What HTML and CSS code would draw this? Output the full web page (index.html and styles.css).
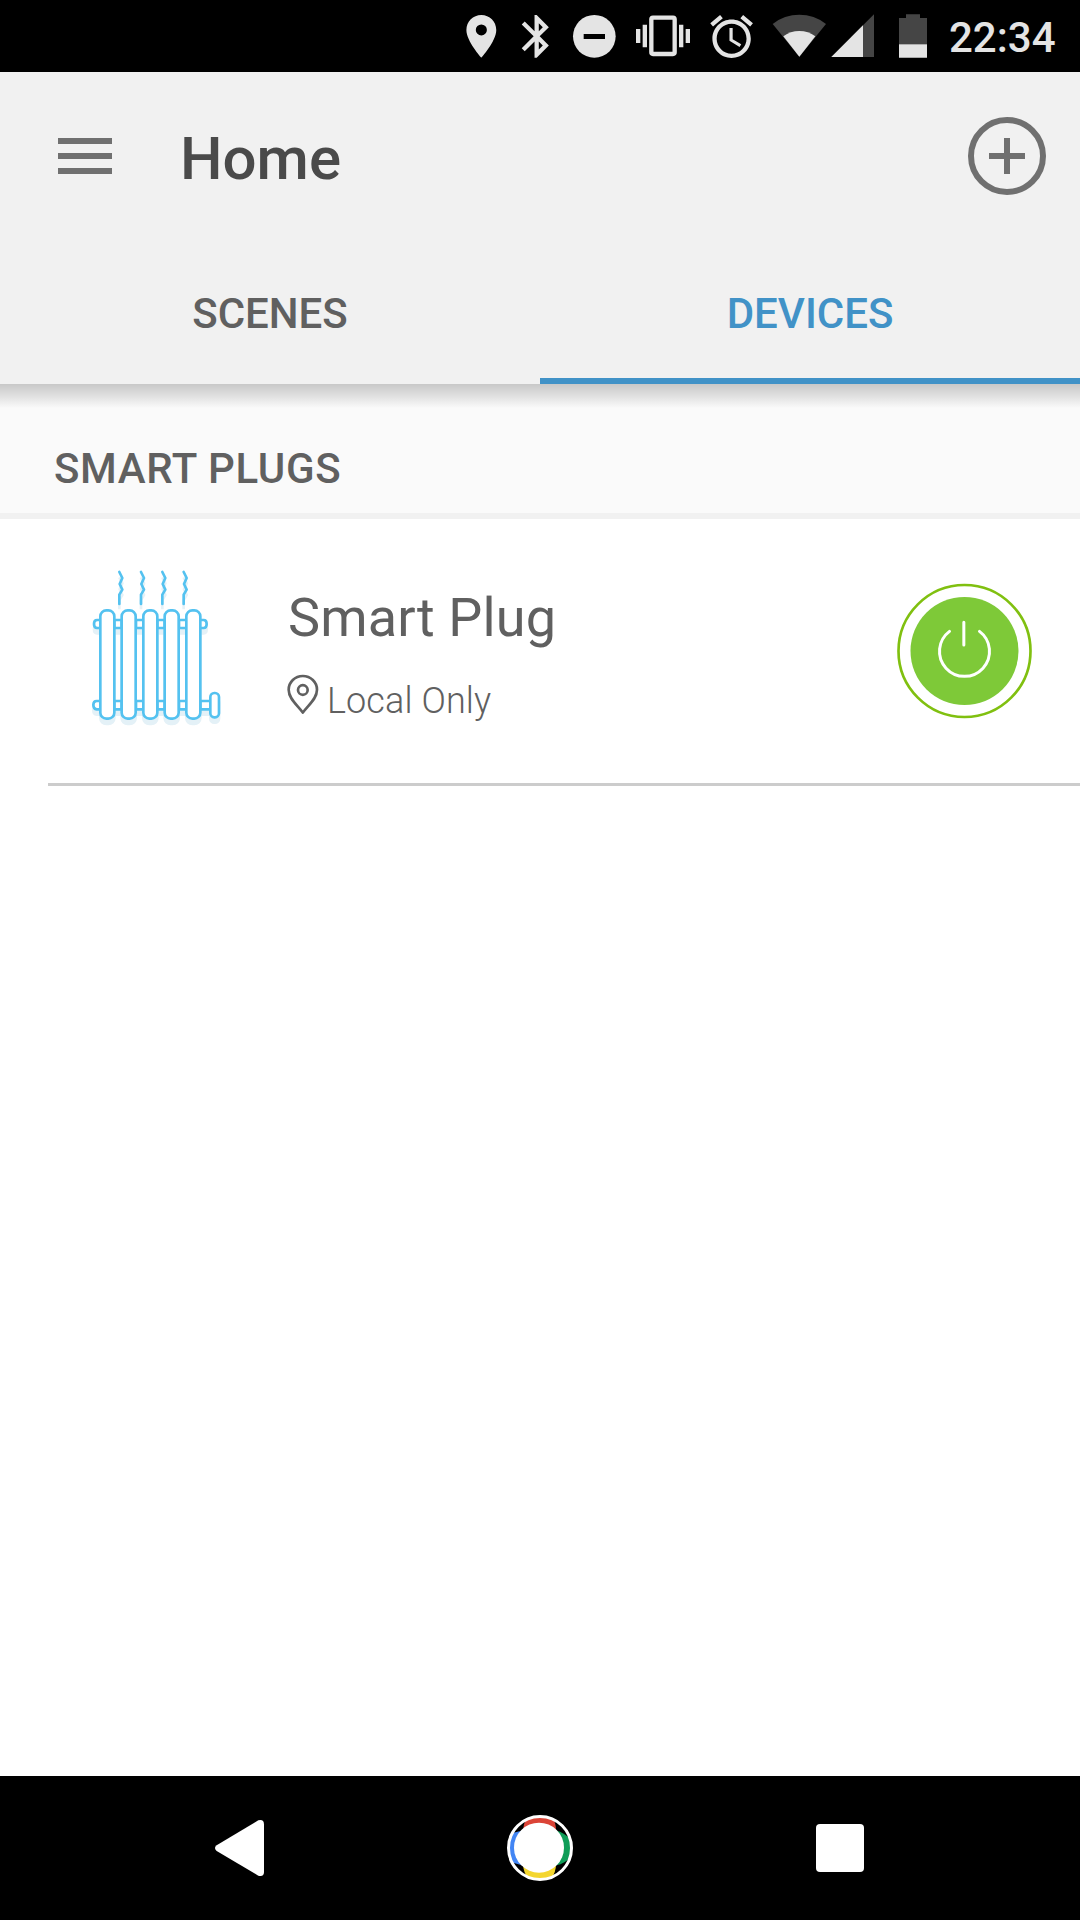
FILE: index.html
```html
<!DOCTYPE html>
<html lang="en">
<head>
<meta charset="utf-8">
<title>Home</title>
<link rel="stylesheet" href="styles.css">
</head>
<body>
<div class="status-bar">
  <svg width="60" height="72" viewBox="0 0 180 216"><path transform="translate(17.2 32.2) scale(6.4)" fill-rule="evenodd" d="M12 2C8.13 2 5 5.13 5 9c0 5.25 7 13 7 13s7-7.75 7-13c0-3.87-3.13-7-7-7zm0 9.6a2.6 2.6 0 1 1 0-5.2 2.6 2.6 0 0 1 0 5.2z"/></svg>
  <svg width="50" height="72" viewBox="180 0 150 216"><path transform="translate(183.2 32.2) scale(6.4)" d="M17.71 7.71L12 2h-1v7.59L6.41 5 5 6.41 10.59 12 5 17.59 6.41 19 11 14.41V22h1l5.71-5.71-4.3-4.29 4.3-4.29zM13 5.83l1.88 1.88L13 9.59V5.83zm1.88 10.46L13 18.17v-3.76l1.88 1.88z"/></svg>
  <svg width="70" height="72" viewBox="330 0 210 216"><circle cx="433" cy="109" r="64"/><path fill="#000" d="M401 102h64v15h-64z"/></svg>
  <svg width="70" height="72" viewBox="540 0 210 216"><rect x="604" y="53" width="70" height="109" rx="5" fill="none" stroke="#e4e4e4" stroke-width="13"/><path d="M558 87h13v42h-13zM578 74h13v68h-13zM687 74h13v68h-13zM707 87h13v42h-13z"/></svg>
  <svg width="60" height="72" viewBox="750 0 180 216"><path transform="translate(768 33) scale(6.4)" d="M22 5.72l-4.6-3.86-1.29 1.53 4.6 3.86L22 5.72zM7.88 3.39L6.6 1.86 2 5.71l1.29 1.53 4.59-3.85zM12.5 8H11v6l4.75 2.85.75-1.23-4-2.37V8zM12 4c-4.97 0-9 4.03-9 9s4.02 9 9 9c4.97 0 9-4.03 9-9s-4.03-9-9-9zm0 16c-3.87 0-7-3.13-7-7s3.13-7 7-7 7 3.13 7 7-3.13 7-7 7z"/></svg>
  <svg width="69" height="72" viewBox="0 0 207 216"><path class="dim" d="M118 170L38 72A129 129 0 0 1 198 72Z"/><path d="M118 170L70 109A79 79 0 0 1 166 109Z"/></svg>
  <svg width="53" height="72" viewBox="207 0 159 216"><path class="dim" d="M342 43V171H214Z"/><path d="M309 76V171H214Z"/></svg>
  <svg width="60" height="72" viewBox="366 0 180 216"><path class="dim" d="M438 43h42v11h21v119h-84V54h21z"/><path d="M417 133h84v40h-84z"/></svg>
  <span class="clock">22:34</span>
</div>

<header class="app-header">
  <div class="toolbar">
    <svg class="menu-icon" width="54" height="36" viewBox="0 0 54 36"><path d="M0 0h54v6H0zM0 15h54v6H0zM0 30h54v6H0z"/></svg>
    <h1 class="title">Home</h1>
    <svg class="add-icon" width="80" height="80" viewBox="0 0 80 80"><circle cx="40" cy="40" r="36"/><path d="M22 40h36M40 22v36"/></svg>
  </div>
  <nav class="tabs">
    <a class="tab">SCENES</a>
    <a class="tab active">DEVICES</a>
  </nav>
</header>

<main class="content">
  <h2 class="section-title">SMART PLUGS</h2>
  <section class="device">
    <svg class="radiator" width="160" height="170" viewBox="0 0 480 510">
      <defs>
        <g id="radiator-shape">
          <path fill="none" d="M118 36l9 18-8 18 8 17-9 15v28M183 36l9 18-8 18 8 17-9 15v28M247 36l9 18-8 18 8 17-9 15v28M311 36l9 18-8 18 8 17-9 15v28"/>
          <path d="M61 180H51q-9 0-9 12t9 12H61M361 180h10q9 0 9 12t-9 12H361"/>
          <path d="M103 180h22v24h-22zM168 180h22v24h-22zM232 180h22v24h-22zM297 180h22v24h-22z"/>
          <path d="M61 423H50q-10 0-10 12t10 13H61M103 423h22v25h-22zM168 423h22v25h-22zM232 423h22v25h-22zM297 423h22v25h-22zM361 423h30v25h-30z"/>
          <rect x="61" y="151" width="42" height="325" rx="18"/><rect x="125" y="151" width="42" height="325" rx="18"/><rect x="190" y="151" width="42" height="325" rx="18"/><rect x="254" y="151" width="42" height="325" rx="18"/><rect x="319" y="151" width="42" height="325" rx="18"/>
          <rect x="391" y="399" width="26" height="73" rx="12"/>
        </g>
      </defs>
      <use href="#radiator-shape" class="radiator-shade" y="16"/>
      <use href="#radiator-shape" class="radiator-line"/>
    </svg>
    <div class="device-text">
      <div class="device-name">Smart Plug</div>
      <div class="device-status">
        <svg width="40" height="44" viewBox="42 306 120 132"><path d="M98.500 428C86 408 56 388 56 359a42.500 41 0 0 1 85 0C141 388 111 408 98.500 428Z"/><circle cx="98.500" cy="360" r="14.500"/></svg>
        <span>Local Only</span>
      </div>
    </div>
    <svg class="power" width="200" height="160" viewBox="0 0 600 480"><circle cx="253.500" cy="243" r="198" fill="#fff" stroke="#80c010" stroke-width="8"/><circle cx="253.500" cy="243" r="162" fill="#7ec938"/><path d="M208.500 184A75 75 0 1 0 298.500 184M251.500 157V225" fill="none" stroke="#fff" stroke-width="9" stroke-linecap="round"/></svg>
  </section>
</main>

<footer class="nav-bar">
  <div class="nav-item"><svg width="60" height="60" viewBox="90 144 180 180"><path fill="#fff" d="M110 226L235 151Q252 147 252 163V307Q252 321 235 317L110 243Q100 234 110 226Z"/></svg></div>
  <div class="nav-item"><svg width="72" height="72" viewBox="972 126 216 216">
    <clipPath id="home-disc"><circle cx="1079.500" cy="234" r="96"/></clipPath>
    <g clip-path="url(#home-disc)"><path fill="#db4437" d="M1029 180Q1030 163 1040 144H1118Q1128 160 1128 180Z"/><path fill="#4285f4" d="M1027 286Q1008 283 980 270V200Q1000 185 1027 182Z"/><path fill="#0f9d58" d="M1130 182Q1150 186 1180 214V254Q1155 282 1130 286Z"/><path fill="#f4d62f" d="M1029 284Q1030 305 1046 330H1112Q1128 306 1128 284Z"/></g>
    <circle cx="1080" cy="234" r="94.500" fill="none" stroke="#fff" stroke-width="9"/><circle cx="1077" cy="233" r="75" fill="#fff"/></svg></div>
  <div class="nav-item"><div class="recents"></div></div>
</footer>
</body>
</html>
```
FILE: styles.css
```css
* { box-sizing: border-box; }
body {
  margin: 0;
  width: 1080px;
  height: 1920px;
  display: flex;
  flex-direction: column;
  overflow: hidden;
  background: #fff;
  color: #606060;
  font-family: Roboto, sans-serif;
}
svg { display: block; flex: none; }
h1, h2 { margin: 0; font-weight: 500; }

.status-bar {
  height: 72px;
  padding-left: 450px;
  display: flex;
  background: #000;
  fill: #e4e4e4;
}
.status-bar .dim { fill: #454545; }
.clock {
  padding-left: 7px;
  padding-top: 1px;
  line-height: 74px;
  font-size: 42px;
  font-weight: 500;
  color: #e4e4e4;
}

.app-header { height: 312px; background: #f1f1f1; }
.toolbar {
  height: 168px;
  padding: 0 33px 0 57.5px;
  display: flex;
  align-items: center;
}
.menu-icon { fill: #707070; }
.title {
  flex: 1;
  padding: 5px 0 0 68.5px;
  font-size: 60px;
  line-height: 70px;
  color: #4a4a4a;
}
.add-icon { fill: none; stroke: #707070; stroke-width: 6; }
.tabs { height: 144px; display: flex; }
.tab {
  flex: 1;
  padding-top: 4px;
  border-bottom: 6px solid transparent;
  font-size: 42px;
  font-weight: 500;
  line-height: 140px;
  text-align: center;
}
.tab.active { color: #4192c7; border-bottom-color: #4192c7; }

.content { flex: 1; }
.section-title {
  height: 135px;
  padding: 60px 0 0 54px;
  border-bottom: 6px solid #f1f1f1;
  background: linear-gradient(#c8c8c8, #e0e0e0 12px, #fafafa 24px);
  font-size: 42px;
  line-height: 50px;
  letter-spacing: 0.6px;
}
.device {
  height: 267px;
  display: flex;
  align-items: flex-start;
  padding-left: 80px;
  background: linear-gradient(#ccc, #ccc) 48px 100% / 1032px 3px no-repeat;
}
.radiator { margin-top: 41px; }
.radiator-shade { fill: #e4f1f7; stroke: #e4f1f7; stroke-width: 8; }
.radiator-line { fill: #fff; stroke: #54c2f0; stroke-width: 8; stroke-linecap: round; stroke-linejoin: round; }
.device-text { flex: 1; padding: 67px 0 0 44px; }
.device-name { padding-left: 4px; font-size: 54px; line-height: 64px; letter-spacing: 0.15px; }
.device-status {
  margin-top: 22px;
  display: flex;
  gap: 3px;
  font-size: 36px;
  font-weight: 300;
  line-height: 42px;
  letter-spacing: 0.1px;
}
.device-status svg { fill: none; stroke: #606060; stroke-width: 8; stroke-linejoin: round; }
.device-status span { padding-top: 8px; }
.power { margin-top: 51px; }

.nav-bar {
  height: 144px;
  display: flex;
  justify-content: center;
  background: #000;
}
.nav-item { width: 300px; display: flex; align-items: center; justify-content: center; }
.recents { width: 48px; height: 48px; border-radius: 4px; background: #fff; }
```
